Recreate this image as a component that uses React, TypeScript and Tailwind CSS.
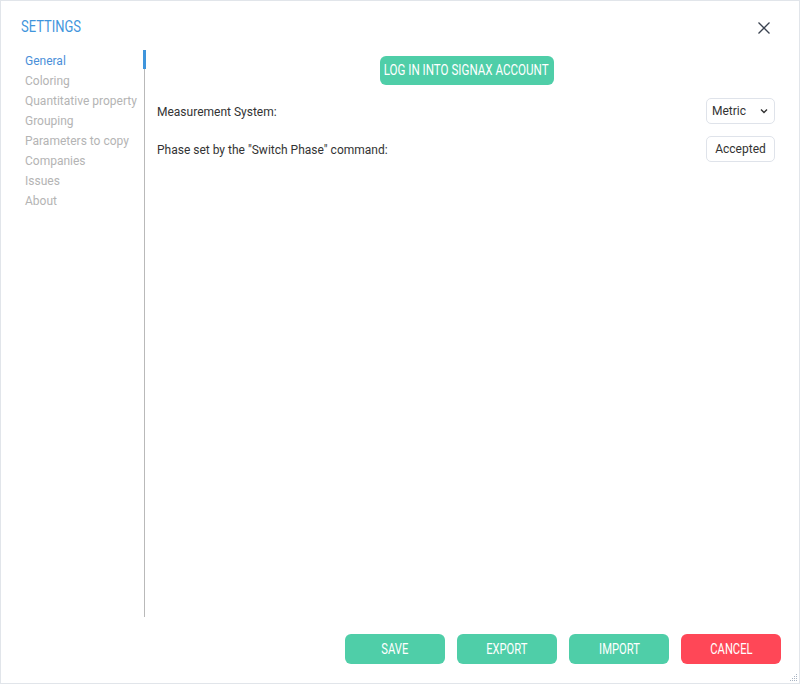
import React from "react";

function Cond({ children }: { children: React.ReactNode }) {
  return <span className="inline-block shrink-0 scale-x-[0.8] whitespace-nowrap">{children}</span>;
}

export default function App() {
  const items = ["General", "Coloring", "Quantitative property", "Grouping", "Parameters to copy", "Companies", "Issues", "About"];
  const btn = "w-[100px] h-[30px] rounded-[6px] text-white text-[14px] flex items-center justify-center overflow-visible";
  return (
    <div className="w-[800px] h-[684px] bg-white border border-[#e1e5ea] flex flex-col relative" style={{ fontFamily: 'Roboto, "Open Sans", sans-serif' }}>
      <div className="h-[49px] flex items-start justify-between pl-[20px] pr-[28px] pt-[16px]">
        <div className="text-[16px] leading-[20px] text-[#3f95dc] origin-left scale-x-[0.81]">SETTINGS</div>
        <svg width="14" height="14" viewBox="0 0 14 14" className="mt-[4px]">
          <path d="M1.5 1.5 L12.5 12.5 M12.5 1.5 L1.5 12.5" stroke="#3a4250" strokeWidth="1.3" />
        </svg>
      </div>
      <div className="flex flex-1 min-h-0">
        <div className="w-[142px] pl-[24px] pt-[1px] flex flex-col">
          {items.map((t, i) => (
            <div key={t} className={`h-[20px] leading-[20px] text-[12px] whitespace-nowrap ${i === 0 ? "text-[#4a8fd9]" : "text-[#b4b4b4]"}`}>{t}</div>
          ))}
        </div>
        <div className="w-[3px] flex flex-col items-center">
          <div className="w-[3px] h-[19px] bg-[#3f95dc]" />
          <div className="w-[1px] flex-1 bg-[#b9b9b9]" />
        </div>
        <div className="flex-1 pl-[11px] pr-[24px] pt-[6px]">
          <div className="flex justify-center">
            <button className="h-[29px] w-[174px] rounded-[6px] bg-[#4fcea8] text-white text-[14.5px] flex items-center justify-center ml-[1px]"><Cond>LOG IN INTO SIGNAX ACCOUNT</Cond></button>
          </div>
          <div className="flex items-center justify-between mt-[13px] h-[26px]">
            <span className="text-[12px] text-[#333] mt-[1px]">Measurement System:</span>
            <div className="h-[26px] w-[69px] border border-[#dfe3ea] rounded-[5px] flex items-center justify-between pl-[5px] pr-[6px] text-[12px] text-[#333]">
              <span>Metric</span>
              <svg width="8" height="6" viewBox="0 0 8 6"><path d="M1 1.5 L4 4.5 L7 1.5" stroke="#333" strokeWidth="1.4" fill="none" /></svg>
            </div>
          </div>
          <div className="flex items-center justify-between mt-[12px] h-[26px]">
            <span className="text-[12px] text-[#333] mt-[1px]">Phase set by the "Switch Phase" command:</span>
            <div className="h-[26px] w-[69px] border border-[#dfe3ea] rounded-[5px] flex items-center justify-center text-[12px] text-[#333]">Accepted</div>
          </div>
        </div>
      </div>
      <div className="h-[66px] flex items-start justify-end gap-[12px] pr-[18px] pt-[17px]">
        <button className={`${btn} bg-[#4fcea8]`}><Cond>SAVE</Cond></button>
        <button className={`${btn} bg-[#4fcea8]`}><Cond>EXPORT</Cond></button>
        <button className={`${btn} bg-[#4fcea8]`}><Cond>IMPORT</Cond></button>
        <button className={`${btn} bg-[#ff4757]`}><Cond>CANCEL</Cond></button>
      </div>
      <svg width="10" height="10" viewBox="0 0 10 10" className="absolute right-[1px] bottom-[1px]">
        {[[8, 2], [6, 4], [8, 4], [4, 6], [6, 6], [8, 6], [2, 8], [4, 8], [6, 8], [8, 8]].map(([x, y], i) => (
          <rect key={i} x={x} y={y} width="1" height="1" fill="#a9b4c2" />
        ))}
      </svg>
    </div>
  );
}
